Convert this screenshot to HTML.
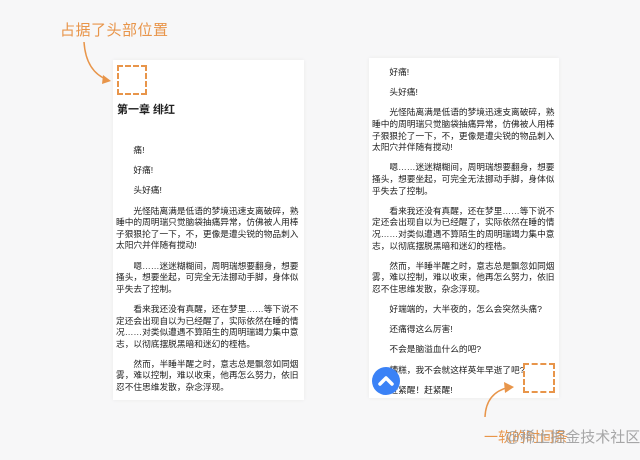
<!DOCTYPE html>
<html><head><meta charset="utf-8"><style>
*{margin:0;padding:0;box-sizing:border-box}
body{width:640px;height:460px;background:#f7f7f8;position:relative;overflow:hidden;font-family:"Liberation Sans","Noto Sans CJK SC",sans-serif}
.card{position:absolute;background:#fff;box-shadow:0 0 4px rgba(0,0,0,.06)}
.txt{position:absolute;width:186px;font-size:8.7px;line-height:11.6px;color:#1e1e1e}
.txt p{text-indent:2em;margin-bottom:8.6px}
.dash{position:absolute;border:2px dashed #e8954a}
.note{position:absolute;color:#e8954a;white-space:nowrap;font-family:"WenQuanYi Zen Hei","Noto Sans CJK SC",sans-serif}
</style></head><body>
<div class="note" style="left:60px;top:19px;font-size:15px;letter-spacing:0.5px">占据了头部位置</div>
<div class="card" style="left:113px;top:60px;width:191px;height:340px"></div>
<div class="dash" style="left:117px;top:65px;width:30px;height:30px"></div>
<div style="position:absolute;left:117px;top:101px;font-size:11px;font-weight:bold;color:#222">第一章 绯红</div>
<div class="txt" style="left:116px;top:145px">
<p>痛!</p><p>好痛!</p><p>头好痛!</p>
<p>光怪陆离满是低语的梦境迅速支离破碎，熟睡中的周明瑞只觉脑袋抽痛异常，仿佛被人用棒子狠狠抡了一下，不，更像是遭尖锐的物品刺入太阳穴并伴随有搅动!</p>
<p>嗯……迷迷糊糊间，周明瑞想要翻身，想要搔头，想要坐起，可完全无法挪动手脚，身体似乎失去了控制。</p>
<p>看来我还没有真醒，还在梦里……等下说不定还会出现自以为已经醒了，实际依然在睡的情况……对类似遭遇不算陌生的周明瑞竭力集中意志，以彻底摆脱黑暗和迷幻的桎梏。</p>
<p>然而，半睡半醒之时，意志总是飘忽如同烟雾，难以控制，难以收束，他再怎么努力，依旧忍不住思维发散，杂念浮现。</p>
</div>
<div class="card" style="left:369px;top:58px;width:190px;height:340px"></div>
<div class="txt" style="left:372px;top:67px">
<p>好痛!</p><p>头好痛!</p>
<p>光怪陆离满是低语的梦境迅速支离破碎，熟睡中的周明瑞只觉脑袋抽痛异常，仿佛被人用棒子狠狠抡了一下，不，更像是遭尖锐的物品刺入太阳穴并伴随有搅动!</p>
<p>嗯……迷迷糊糊间，周明瑞想要翻身，想要搔头，想要坐起，可完全无法挪动手脚，身体似乎失去了控制。</p>
<p>看来我还没有真醒，还在梦里……等下说不定还会出现自以为已经醒了，实际依然在睡的情况……对类似遭遇不算陌生的周明瑞竭力集中意志，以彻底摆脱黑暗和迷幻的桎梏。</p>
<p>然而，半睡半醒之时，意志总是飘忽如同烟雾，难以控制，难以收束，他再怎么努力，依旧忍不住思维发散，杂念浮现。</p>
<p>好端端的，大半夜的，怎么会突然头痛?</p>
<p>还痛得这么厉害!</p>
<p>不会是脑溢血什么的吧?</p>
<p>糟糕，我不会就这样英年早逝了吧?</p>
<p>赶紧醒！赶紧醒!</p>
</div>
<div class="dash" style="left:523px;top:363px;width:32px;height:30px"></div>
<svg style="position:absolute;left:0;top:0" width="640" height="460">
<path d="M84 42 Q86 72 108 80" fill="none" stroke="#e8954a" stroke-width="1.5"/>
<path d="M103 75 L111 81 L102 84 Z" fill="#e8954a"/>
<path d="M485 417 Q486 392 510 387" fill="none" stroke="#e8954a" stroke-width="1.5"/>
<path d="M504 382 L514 387 L505 393 Z" fill="#e8954a"/>
</svg>
<div style="position:absolute;left:372px;top:367px;width:28px;height:28px;border-radius:50%;background:#3b82f6"></div>
<svg style="position:absolute;left:372px;top:367px" width="28" height="28"><path d="M8 17 L14 11 L20 17" fill="none" stroke="#fff" stroke-width="3.5" stroke-linecap="round" stroke-linejoin="round"/></svg>
<div class="note" style="left:484px;top:427px;font-size:14px">一软的时间条</div>
<div style="position:absolute;left:505px;top:426px;font-size:15px;color:#999;opacity:.85;white-space:nowrap">@稀土掘金技术社区</div>
</body></html>
